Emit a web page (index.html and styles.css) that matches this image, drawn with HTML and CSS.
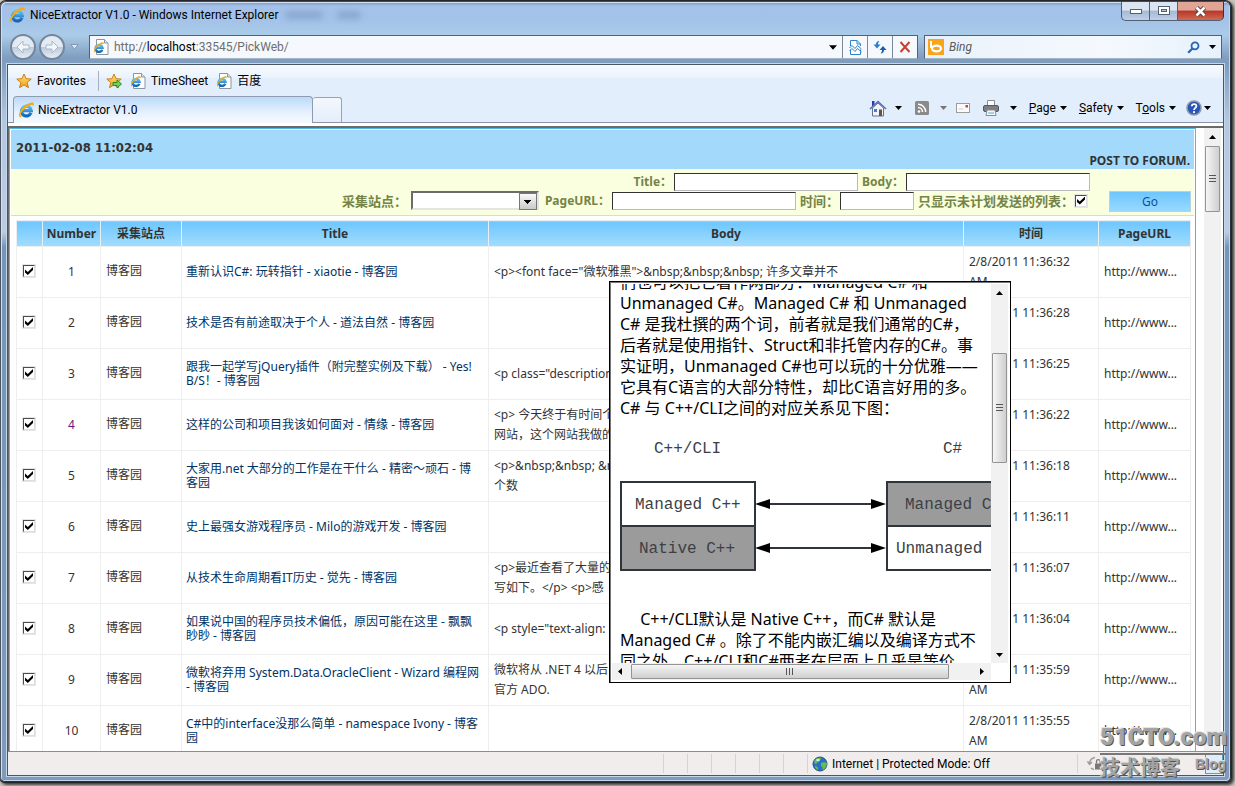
FILE: index.html
```
<!DOCTYPE html>
<html lang="zh-CN">
<head>
<meta charset="utf-8">
<title>NiceExtractor V1.0</title>
<link rel="stylesheet" href="styles.css">
</head>
<body>
<svg class="defs" aria-hidden="true">
  <defs>
    <linearGradient id="ieBlue" x1="0" y1="0" x2="0" y2="1"><stop offset="0" stop-color="#5cc4f4"/><stop offset="1" stop-color="#1464b4"/></linearGradient>
    <linearGradient id="starFill" x1="0" y1="0" x2="0" y2="1"><stop offset="0" stop-color="#ffe680"/><stop offset="1" stop-color="#f49a12"/></linearGradient>
    <symbol id="ie" viewBox="0 0 16 16">
      <path d="M13 10.800A4.900 4.900 0 1 1 13.300 8.600H5" fill="none" stroke="url(#ieBlue)" stroke-width="3.200"/>
      <path d="M2.200 15.300C-1 14 2.400 7 7.600 3.200 11 .6 15.600-.4 15.800 1.800c.1.800-.2 1.800-.8 2.700.1-1.200-.9-1.700-2.400-1.200C8.600 4.600 3.400 9.600 2.600 12.400c-.4 1.400.4 2 1.700 1.400-.8.800-1.600 1.500-2.100 1.500z" fill="#f2ab1c"/>
    </symbol>
    <symbol id="iepage" viewBox="0 0 16 16">
      <path d="M3.500.5h8l3.500 3.500v11.500H3.500z" fill="#fff" stroke="#8c959e"/>
      <path d="M11.500.5v3.500H15" fill="#dde3e8" stroke="#8c959e"/>
      <path d="M9.300 10.700A3.500 3.500 0 1 1 9.500 8.700H3.400" fill="none" stroke="url(#ieBlue)" stroke-width="2.400"/>
      <path d="M1.600 13.600C-.4 12.400 2 7.600 5.600 5c2.600-1.800 5.200-2.200 5.200-.8 0 .6-.2 1-.4 1.400-.2-.8-.8-1-1.800-.6C6.200 6 2.500 9.400 1.900 11.600c-.3 1.200.1 1.400 1 1.100z" fill="#f2ab1c"/>
    </symbol>
    <symbol id="star" viewBox="0 0 16 16">
      <path d="M8 1l2 4.700 5.200.4-4 3.400 1.300 5.200L8 11.900l-4.500 2.800 1.300-5.200-4-3.400 5.200-.4z" fill="url(#starFill)" stroke="#d08010"/>
    </symbol>
    <symbol id="down" viewBox="0 0 7 4"><path d="M0 0h7L3.500 4z" fill="currentColor"/></symbol>
    <symbol id="up" viewBox="0 0 7 4"><path d="M0 4h7L3.500 0z" fill="currentColor"/></symbol>
  </defs>
</svg>

<div class="window">
  <header class="titlebar">
    <svg class="ico16"><use href="#ie"/></svg>
    <h1 class="caption">NiceExtractor V1.0 - Windows Internet Explorer</h1>
    <span class="ghost ghost-a"></span><span class="ghost ghost-b"></span>
    <div class="winbtns">
      <button class="wb" aria-label="Minimize"><svg width="14" height="8" viewBox="0 0 14 8"><rect x="1.500" y="2.500" width="11" height="4" fill="#fff" stroke="#55606e"/></svg></button>
      <button class="wb" aria-label="Restore"><svg width="12" height="10" viewBox="0 0 12 10"><rect x=".5" y=".5" width="11" height="8" fill="#fff" stroke="#55606e"/><rect x="3.500" y="3.500" width="5" height="2" fill="#b8cce4" stroke="#55606e"/></svg></button>
      <button class="wb wb-close" aria-label="Close"><svg width="13" height="11" viewBox="0 0 13 11"><path d="M2.500 1.500l8 8m0-8l-8 8" stroke="#5c2f36" stroke-width="4.400"/><path d="M2.500 1.500l8 8m0-8l-8 8" stroke="#fff" stroke-width="2.600"/></svg></button>
    </div>
  </header>

  <nav class="navrow">
    <button class="round" aria-label="Back"><svg viewBox="0 0 16 16"><path d="M8 2L2 8l6 6v-4h6V6H8z" fill="#f4f7fa" stroke="#a9b7c6"/></svg></button>
    <button class="round" aria-label="Forward"><svg viewBox="0 0 16 16"><path d="M8 2l6 6-6 6v-4H2V6h6z" fill="#f4f7fa" stroke="#a9b7c6"/></svg></button>
    <button class="plain hist" aria-label="Recent pages"><svg width="9" height="6" viewBox="0 0 9 6"><path d="M.8.5h7.400L4.500 5z" fill="#dfe9f4" stroke="#8499b3"/></svg></button>
    <div class="address">
      <svg class="ico16"><use href="#iepage"/></svg>
      <p class="url" role="textbox" aria-label="Address">http://<b>localhost</b>:33545/PickWeb/</p>
      <button class="plain drop" aria-label="Show history"><svg class="arrow big"><use href="#down"/></svg></button>
      <button class="cell" aria-label="Compatibility view"><svg width="13" height="15" viewBox="0 0 13 15"><path d="M1.500 6V.5H8L11.500 4v2M1.500 9.500v5h10v-5" fill="#fff" stroke="#3182c8"/><path d="M8 .5V4h3.500" fill="none" stroke="#3182c8"/><path d="M.5 8l2.500-2.500L6 8.500l2.500-3L12.500 9M.5 11L3 8.500l3 3 2.500-3 4 3.500" fill="none" stroke="#3182c8"/></svg></button>
      <button class="cell" aria-label="Refresh"><svg width="14" height="14" viewBox="0 0 14 14"><path d="M6.500 1C4 1 3 2.500 3 4.500H.5L4 8.500l3.500-4H5C5 3 5.500 2 6.500 1z" fill="#2a7cd0"/><path d="M7.500 13.500C10 13.500 11 12 11 10h2.500L10 6l-3.500 4H9c0 1.500-.5 2.500-1.500 3.500z" fill="#1c5eaa"/></svg></button>
      <button class="cell" aria-label="Stop"><svg width="12" height="12" viewBox="0 0 12 12"><path d="M1.500 1l9 10M10.500 1l-9 10" stroke="#c8402e" stroke-width="2"/></svg></button>
    </div>
    <div class="search">
      <svg class="ico16" viewBox="0 0 16 16"><rect width="16" height="16" fill="#f9a51a"/><path d="M3 2v7" stroke="#fff" stroke-width="2"/><ellipse cx="8.500" cy="9.500" rx="4.500" ry="2.800" fill="none" stroke="#fff" stroke-width="2.200"/></svg>
      <input class="searchbox" type="text" placeholder="Bing" aria-label="Search">
      <button class="plain" aria-label="Search"><svg width="13" height="13" viewBox="0 0 13 13"><circle cx="8" cy="4.800" r="3.500" fill="#e6f2fc" stroke="#2566b4" stroke-width="1.800"/><path d="M5.400 7.400L1.200 11.800" stroke="#2566b4" stroke-width="2.200"/></svg></button>
      <button class="plain" aria-label="Search options"><svg class="arrow"><use href="#down"/></svg></button>
    </div>
  </nav>

  <div class="frame">
    <div class="favbar">
      <button class="plain fav"><svg class="ico16"><use href="#star"/></svg>Favorites</button>
      <i class="sep"></i>
      <button class="plain" aria-label="Add to favorites bar"><svg class="ico16" viewBox="0 0 16 16"><use href="#star"/><path d="M7 9.500h4V7l4.500 4-4.500 4v-2.500H7z" fill="#6ed05a" stroke="#2c8c28"/></svg></button>
      <a class="favlink" href="#"><svg class="ico16"><use href="#iepage"/></svg>TimeSheet</a>
      <a class="favlink" href="#"><svg class="ico16"><use href="#iepage"/></svg>百度</a>
    </div>
    <div class="tabrow">
      <button class="tab"><svg class="ico16"><use href="#ie"/></svg>NiceExtractor V1.0</button>
      <button class="newtab" aria-label="New tab"></button>
      <div class="commands">
        <button class="plain" aria-label="Home"><svg width="18" height="17" viewBox="0 0 18 17"><path d="M3.500 8v8h11V8L9 3z" fill="#f0f2f8" stroke="#69718c"/><path d="M3 1h2.500v4L3 7z" fill="#2c3ca8"/><path d="M1 9l8-7.500L17 9" fill="none" stroke="#5a6cb4" stroke-width="1.600"/><rect x="5" y="9" width="3" height="3" fill="#4c7cc0"/><path d="M10 9.500h3V16h-3z" fill="#665244"/></svg></button>
        <button class="plain gap-a" aria-label="Home options"><svg class="arrow"><use href="#down"/></svg></button>
        <button class="plain" aria-label="Feeds"><svg width="14" height="14" viewBox="0 0 14 14"><rect width="14" height="14" rx="1.500" fill="#8a8a8a"/><circle cx="4" cy="10.500" r="1.300" fill="#fff"/><path d="M3 6.500a4.500 4.500 0 0 1 4.500 4.500M3 3.300A7.700 7.700 0 0 1 10.700 11" fill="none" stroke="#fff" stroke-width="1.500"/></svg></button>
        <button class="plain gap-c dim" aria-label="Feed options"><svg class="arrow"><use href="#down"/></svg></button>
        <button class="plain gap-b" aria-label="Read mail"><svg width="14" height="10" viewBox="0 0 14 10"><rect x=".5" y=".5" width="13" height="9" fill="#fbfbfb" stroke="#9c9c9c"/><rect x="9.500" y="2" width="2.500" height="2.500" fill="#d04040"/><path d="M2.500 6h5" stroke="#d0d0d0"/></svg></button>
        <button class="plain" aria-label="Print"><svg width="16" height="16" viewBox="0 0 16 16"><path d="M4.500 6V.5h7V6" fill="#fff" stroke="#8d8d8d"/><rect x=".5" y="5.500" width="15" height="6" rx="1.500" fill="#7c7f84" stroke="#55585c"/><path d="M4 10h8l1 5.500H3z" fill="#f4f9ff" stroke="#8d8d8d"/><path d="M5 13h6" stroke="#58a8e0"/></svg></button>
        <button class="plain gap-c" aria-label="Print options"><svg class="arrow"><use href="#down"/></svg></button>
        <button class="plain menu"><span><u>P</u>age</span><svg class="arrow"><use href="#down"/></svg></button>
        <button class="plain menu"><span><u>S</u>afety</span><svg class="arrow"><use href="#down"/></svg></button>
        <button class="plain menu menu-last"><span>T<u>o</u>ols</span><svg class="arrow"><use href="#down"/></svg></button>
        <button class="plain help" aria-label="Help"><svg width="16" height="16" viewBox="0 0 16 16"><circle cx="8" cy="8" r="7" fill="#2a55b8" stroke="#8c98ac" stroke-width="1.600"/><path d="M5.800 6.300c0-3 4.600-2.900 4.600-.2C10.400 7.800 8 7.900 8 10" fill="none" stroke="#fff" stroke-width="1.800"/><circle cx="8" cy="12.200" r="1.100" fill="#fff"/></svg><svg class="arrow"><use href="#down"/></svg></button>
      </div>
    </div>

    <div class="viewport">
      <main class="page">
        <div class="banner">
          <time>2011-02-08 11:02:04</time>
          <strong>POST TO FORUM.</strong>
        </div>
        <form class="filter">
          <div class="fields">
            <div class="line">
              <label for="f-title" class="latin">Title：</label><input id="f-title" class="txt" type="text">
              <label for="f-body" class="latin">Body：</label><input id="f-body" class="txt" type="text">
            </div>
            <div class="line">
              <label for="f-site">采集站点：</label><span class="pick"><select id="f-site"><option></option></select></span>
              <label for="f-url" class="latin">PageURL：</label><input id="f-url" class="txt" type="text">
              <label for="f-time">时间：</label><input id="f-time" class="txt short" type="text">
              <label for="f-only">只显示未计划发送的列表：</label><input id="f-only" class="chk" type="checkbox" checked>
            </div>
          </div>
          <button class="go" type="button">Go</button>
        </form>
        <div class="gridwrap">
        <table class="grid">
          <colgroup><col class="c-chk"><col class="c-num"><col class="c-site"><col class="c-title"><col><col class="c-time"><col class="c-url"></colgroup>
          <thead><tr><th aria-label="Select"></th><th>Number</th><th>采集站点</th><th>Title</th><th>Body</th><th>时间</th><th>PageURL</th></tr></thead>
          <tbody>
            <tr><td><input class="chk" type="checkbox" aria-label="1" checked></td><td>1</td><td>博客园</td><td><a href="#">重新认识C#: 玩转指针 - xiaotie - 博客园</a></td><td>&lt;p&gt;&lt;font face="微软雅黑"&gt;&amp;nbsp;&amp;nbsp;&amp;nbsp; 许多文章并不</td><td>2/8/2011 11:36:32<br>AM</td><td>http://www...</td></tr>
            <tr><td><input class="chk" type="checkbox" aria-label="2" checked></td><td>2</td><td>博客园</td><td><a href="#">技术是否有前途取决于个人 - 道法自然 - 博客园</a></td><td></td><td>2/8/2011 11:36:28<br>AM</td><td>http://www...</td></tr>
            <tr><td><input class="chk" type="checkbox" aria-label="3" checked></td><td>3</td><td>博客园</td><td><a href="#">跟我一起学写jQuery插件（附完整实例及下载） - Yes!<br>B/S！- 博客园</a></td><td>&lt;p class="description"&gt;</td><td>2/8/2011 11:36:25<br>AM</td><td>http://www...</td></tr>
            <tr><td><input class="chk" type="checkbox" aria-label="4" checked></td><td class="seen">4</td><td>博客园</td><td><a href="#">这样的公司和项目我该如何面对 - 情缘 - 博客园</a></td><td>&lt;p&gt; 今天终于有时间个<br>网站，这个网站我做的</td><td>2/8/2011 11:36:22<br>AM</td><td>http://www...</td></tr>
            <tr><td><input class="chk" type="checkbox" aria-label="5" checked></td><td>5</td><td>博客园</td><td><a href="#">大家用.net 大部分的工作是在干什么 - 精密～顽石 - 博<br>客园</a></td><td>&lt;p&gt;&amp;nbsp;&amp;nbsp; &amp;nbsp;<br>个数</td><td>2/8/2011 11:36:18<br>AM</td><td>http://www...</td></tr>
            <tr><td><input class="chk" type="checkbox" aria-label="6" checked></td><td>6</td><td>博客园</td><td><a href="#">史上最强女游戏程序员 - Milo的游戏开发 - 博客园</a></td><td></td><td>2/8/2011 11:36:11<br>AM</td><td>http://www...</td></tr>
            <tr><td><input class="chk" type="checkbox" aria-label="7" checked></td><td>7</td><td>博客园</td><td><a href="#">从技术生命周期看IT历史 - 觉先 - 博客园</a></td><td>&lt;p&gt;最近查看了大量的<br>写如下。&lt;/p&gt; &lt;p&gt;感</td><td>2/8/2011 11:36:07<br>AM</td><td>http://www...</td></tr>
            <tr><td><input class="chk" type="checkbox" aria-label="8" checked></td><td>8</td><td>博客园</td><td><a href="#">如果说中国的程序员技术偏低，原因可能在这里 - 飘飘<br>眇眇 - 博客园</a></td><td>&lt;p style="text-align:</td><td>2/8/2011 11:36:04<br>AM</td><td>http://www...</td></tr>
            <tr><td><input class="chk" type="checkbox" aria-label="9" checked></td><td>9</td><td>博客园</td><td><a href="#">微軟将弃用 System.Data.OracleClient - Wizard 编程网<br>- 博客园</a></td><td>微软将从 .NET 4 以后<br>官方 ADO.</td><td>2/8/2011 11:35:59<br>AM</td><td>http://www...</td></tr>
            <tr><td><input class="chk" type="checkbox" aria-label="10" checked></td><td>10</td><td>博客园</td><td><a href="#">C#中的interface没那么简单 - namespace Ivony - 博客<br>园</a></td><td></td><td>2/8/2011 11:35:55<br>AM</td><td>http://www...</td></tr>
          </tbody>
        </table>
        </div>
      </main>
      <div class="vbar">
        <svg class="arrow"><use href="#up"/></svg>
        <span class="vthumb"><i></i></span>
      </div>

      <section class="preview">
        <div class="doc">
          <p>们也可以把它看作两部分：Managed C# 和<br>Unmanaged C#。Managed C# 和 Unmanaged<br>C# 是我杜撰的两个词，前者就是我们通常的C#，<br>后者就是使用指针、Struct和非托管内存的C#。事<br>实证明，Unmanaged C#也可以玩的十分优雅——<br>它具有C语言的大部分特性，却比C语言好用的多。<br>C# 与 C++/CLI之间的对应关系见下图：</p>
          <svg class="diagram" width="440" height="190" viewBox="0 0 440 190">
            <g fill="none" stroke="#30353b" stroke-width="2">
              <rect x="1" y="63" width="134" height="44" fill="#fff"/>
              <rect x="1" y="107" width="134" height="44" fill="#9b9b9b"/>
              <rect x="267" y="63" width="150" height="44" fill="#9b9b9b"/>
              <rect x="267" y="107" width="150" height="44" fill="#fff"/>
              <path d="M140 85h120M140 129h120"/>
            </g>
            <path d="M135 85l15-5v10zM266 85l-15-5v10zM135 129l15-5v10zM266 129l-15-5v10z" fill="#000"/>
            <g class="dtext">
              <text x="34" y="34">C++/CLI</text><text x="323" y="34">C#</text>
              <text x="15" y="90">Managed C++</text><text x="19" y="134">Native C++</text>
              <text x="285" y="90">Managed C#</text><text x="276" y="134">Unmanaged C#</text>
            </g>
          </svg>
          <p>&emsp; C++/CLI默认是 Native C++，而C# 默认是<br>Managed C# 。除了不能内嵌汇编以及编译方式不<br>同之外，C++/CLI和C#两者在层面上几乎是等价</p>
        </div>
        <div class="pv"><svg class="arrow"><use href="#up"/></svg><span class="pvthumb"><i></i></span><svg class="arrow"><use href="#down"/></svg></div>
        <div class="ph"><svg class="side" viewBox="0 0 4 7"><path d="M4 0v7L0 3.500z"/></svg><span class="phthumb"><i></i></span><svg class="side" viewBox="0 0 4 7"><path d="M0 0v7l4-3.500z"/></svg></div>
      </section>
    </div>

    <footer class="status">
      <i></i><i></i><i></i><i></i><i></i><i></i>
      <span class="zone"><svg class="ico16" viewBox="0 0 16 16"><circle cx="8" cy="8" r="7" fill="#2c6fc4" stroke="#2a4f86"/><path d="M2 5c2-3 5-4 7-3 0 2-2 2-2 4-2 0-2 2-4 2zM9 7c2-1 4-1 6 0 0 3-2 6-4 7-1-2 0-3-2-4zM3 10c2 0 3 1 3 4-2-1-3-2-3-4z" fill="#5fc04c"/><ellipse cx="6" cy="4" rx="2" ry="1" fill="#d8f0ff"/></svg>Internet | Protected Mode: Off</span>
      <span class="tray">
        <svg width="15" height="15" viewBox="0 0 15 15"><path d="M8 1.500A6 6 0 0 0 2.500 7.500M.5 5.500l2 3 2.500-2.500M4 12a6 6 0 0 0 3 1.500" fill="none" stroke="#9a9a9a" stroke-width="1.400"/><rect x="8" y="7.500" width="6.500" height="6" fill="#777"/><path d="M9.500 7.500V5.500a1.800 1.800 0 0 1 3.600 0v2" fill="none" stroke="#777" stroke-width="1.300"/></svg>
        <i class="popout"></i>
      </span>
    </footer>
  </div>

  <div class="stamp">
    <p class="stamp-top">51CTO.com</p>
    <p class="stamp-low"><span>技术博客</span><b>Blog</b></p>
  </div>
</div>
</body>
</html>
```
FILE: styles.css
```
* { box-sizing: border-box; }
html { height: 100%; }
body {
  height: 100%;
  margin: 0;
  padding: 1px 4px 4px 0;
  overflow: hidden;
  background: #c9c5ba;
  color: #000;
  font: 12px/16px Roboto, "Noto Sans CJK SC", sans-serif;
}
p, h1 { margin: 0; }
button, input, select { font: inherit; color: inherit; }
button { padding: 0; }
.defs { position: absolute; width: 0; height: 0; }
.ico16 { width: 16px; height: 16px; flex: none; }
.arrow { width: 7px; height: 4px; flex: none; }
.arrow.big { width: 8px; height: 5px; }
.plain { border: 0; background: none; display: flex; align-items: center; }

.window {
  position: relative;
  height: 100%;
  display: flex;
  flex-direction: column;
  padding: 0 6px 5px 6px;
  border: 1px solid #2b3038;
  border-top-color: #44495a;
  border-left-color: #4a5260;
  border-radius: 6px 6px 5px 5px;
  background: linear-gradient(180deg, #7f93b4 0, #a3c1ea 4px, #a4c3e8 20px, #abcce8 33px, #7f9dbf 56px, #7f9dbf 62px, #b4c8e2 120px, #bccce2 230px, #7695b8 245px, #7f9abb 100%);
  box-shadow: inset 1px 1px 0 #cfe0f4, inset -1px -1px 0 #bfd6ee, 0 0 0 1px #26262a, 2px 2px 3px 1px #3a3a3a;
}

.titlebar { display: flex; align-items: flex-start; height: 32px; flex: none; }
.titlebar .ico16 { margin: 5px 5px 0 2px; }
.caption { font-size: 12px; line-height: 26px; font-weight: 400; }
.ghost { height: 8px; margin-top: 9px; border-radius: 4px; background: #6f8cb4; filter: blur(3px); opacity: .5; }
.ghost-a { width: 38px; margin-left: 6px; }
.ghost-b { width: 24px; margin-left: 14px; }
.winbtns { display: flex; margin-left: auto; }
.wb {
  width: 28px; height: 19px; display: flex; align-items: center; justify-content: center;
  border: 1px solid #535f72; border-top: 0; border-right: 0;
  background: linear-gradient(#dbe5f1 0 45%, #a6bad4 50%, #bdd0e8);
}
.wb:first-child { border-radius: 0 0 0 5px; }
.wb-close { width: 47px; border-right: 1px solid #4d2a30; border-radius: 0 0 5px 0; background: linear-gradient(#e0a595 0 45%, #b8372a 50%, #cf6a50); }

.navrow { display: flex; align-items: center; height: 26px; flex: none; margin-bottom: 4px; padding-right: 2px; }
.round {
  width: 26px; height: 26px; margin: 0 0 0 3px; padding: 3px; border-radius: 50%;
  border: 2px solid #76869a; background: linear-gradient(#e2eaf3 0 48%, #bccbdc 52%, #e4edf6);
}
.round svg { width: 16px; height: 16px; display: block; }
.hist { margin: 0 10px 0 5px; }
.address { flex: 1; display: flex; align-items: center; height: 24px; border: 1px solid #56616f; border-bottom-color: #a3b4c2; background: #f5f9fd; padding-left: 3px; }
.url { flex: 1; margin-left: 5px; color: #6e6e6e; }
.url b { font-weight: 400; color: #000; }
.drop { margin-right: 5px; }
.cell { width: 25px; height: 22px; border: 0; border-left: 1px solid #7c8997; background: none; display: flex; align-items: center; justify-content: center; }
.search { display: flex; align-items: center; gap: 9px; width: 298px; height: 24px; margin-left: 6px; padding: 0 5px 0 3px; border: 1px solid #56616f; border-bottom-color: #a3b4c2; background: linear-gradient(90deg, #e8f1fb, #f5f9fd 60%, #e6f1fc); }
.searchbox { flex: 1; min-width: 0; padding: 0; margin-left: -4px; border: 0; background: none; font-style: italic; outline: 0; }
.searchbox::placeholder { color: #5a5a5a; opacity: 1; }

.frame { flex: 1; min-height: 0; display: flex; flex-direction: column; border: 1px solid #4a5566; box-shadow: 0 0 0 1px #c4d8ec; background: #fff; }
.favbar { display: flex; align-items: center; height: 31px; padding-left: 8px; flex: none; background: linear-gradient(#f7fbff, #eaf2fc 13px, #e2eefb 13px); }
.fav { gap: 5px; }
.sep { width: 1px; height: 20px; margin: 0 7px 0 12px; background: #a6b2c0; }
.favlink { display: flex; align-items: center; gap: 5px; margin-left: 8px; color: #000; text-decoration: none; }
.tabrow { display: flex; align-items: flex-end; height: 27px; flex: none; padding-left: 5px; background: #e2eefb; border-bottom: 1px solid #8a94a6; }
.tab { display: flex; align-items: center; gap: 4px; width: 300px; height: 27px; margin-bottom: -1px; padding: 0 4px; border: 1px solid #8f9bb0; border-bottom: 0; border-radius: 4px 4px 0 0; background: linear-gradient(#bcdafa, #e6f1fd 60%, #f6faff); text-align: left; }
.newtab { width: 29px; height: 25px; border: 1px solid #98a4b6; border-left: 0; border-bottom: 0; border-radius: 3px 3px 0 0; background: linear-gradient(#f4f8fd, #e4eefa); }
.commands { display: flex; align-items: center; height: 28px; margin-left: auto; padding-right: 12px; }
.gap-a { margin: 0 13px 0 8px; }
.gap-b { margin-right: 13px; }
.gap-c { margin: 0 12px 0 11px; }
.dim { color: #777; margin-right: 9px; }
.menu { gap: 4px; margin-right: 12px; }
.menu-last { margin-right: 10px; }
.help { gap: 2px; }

.viewport { position: relative; flex: 1; min-height: 0; display: flex; overflow: hidden; margin-top: 3px; border-top: 2px solid #6b6b6b; border-left: 1px solid #6b6b6b; font-family: "Noto Sans", "Noto Sans CJK SC", sans-serif; }
.page { flex: 1; min-width: 0; margin-right: 8px; border: 1px solid #4fb7ec; border-bottom: 0; padding: 1px 1px 0; background: #fff; }
.banner { display: flex; justify-content: space-between; height: 39px; padding: 9px 4px 0 5px; background: #a3dafb; color: #333; }
.banner time { font: bold 13px/18px "DejaVu Sans Condensed", "DejaVu Sans", sans-serif; }
.banner strong { font-size: 12px; line-height: 16px; align-self: flex-end; }
.filter { display: flex; align-items: flex-end; justify-content: flex-end; height: 47px; padding: 0 3px 3px 0; border-bottom: 1px solid #d9dcd3; background: #f9ffdf; color: #758346; font-weight: 700; }
.fields { padding-bottom: 2px; }
.line { display: flex; align-items: center; justify-content: flex-end; height: 19px; }
.line label { font-size: 13px; margin: 0 1px 0 4px; }
.line .latin { font-size: 12px; margin-right: 2px; }
.txt { width: 184px; height: 18px; border: 1px solid #333; border-right-color: #bbb; border-bottom-color: #bbb; background: #fff; padding: 0 2px; }
.short { width: 74px; }
.pick { position: relative; display: flex; margin: 0 2px 0 3px; }
.pick select { appearance: none; width: 128px; height: 19px; border: 2px solid #6b6b6b; border-right-color: #e4e4e4; border-bottom-color: #e4e4e4; border-radius: 0; background: #fff; }
.pick::after {
  content: ""; position: absolute; right: 2px; top: 2px; width: 16px; height: 15px; border: 1px solid #777; pointer-events: none;
  background: linear-gradient(#000, #000) center 6px / 7px 1px no-repeat, linear-gradient(#000, #000) center 7px / 5px 1px no-repeat, linear-gradient(#000, #000) center 8px / 3px 1px no-repeat, linear-gradient(#000, #000) center 9px / 1px 1px no-repeat, linear-gradient(#fafafa, #c9c9c9);
}
.go { width: 82px; height: 21px; margin-left: 19px; border: 1px solid #b5d3e8; background: linear-gradient(#6cc6fd, #9ad9ff); color: #0a50a0; line-height: 18px; font-weight: 400; }
.chk { appearance: none; width: 12px; height: 12px; margin: 0; border: 1px solid #4c4c4c; border-right-color: #ddd; border-bottom-color: #ddd; outline: 1px solid #e6e6e6; background: #fff; display: block; flex: none; }
.chk:checked::after { content: ""; display: block; width: 8px; height: 8px; margin: 1px; background: #000; clip-path: polygon(0 30%, 35% 62%, 100% 0, 100% 38%, 35% 100%, 0 68%); }
.line .chk { margin: 0 3px 0 0; }

.gridwrap { padding: 4px 3px 0 5px; }
.grid { width: 100%; table-layout: fixed; border-collapse: collapse; color: #333; border-right: 1px solid #999; }
.c-chk { width: 26px; } .c-num { width: 58px; } .c-site { width: 81px; } .c-title { width: 307px; } .c-time { width: 135px; } .c-url { width: 92px; }
.grid th { height: 26px; padding: 0; border: 1px solid #e8eef2; background: linear-gradient(#6cc6fd, #a3ddff); line-height: 18px; font-weight: 700; }
.grid td { height: 51px; padding: 0 5px; border: 1px solid #eee; line-height: 20px; overflow: hidden; }
.grid td:nth-child(1) { padding: 0 0 2px 6px; }
.grid td:nth-child(2) { text-align: center; }
.grid td:nth-child(3) { padding: 0 0 2px 5px; }
.grid td:nth-child(4) { line-height: 14px; white-space: nowrap; padding: 0 4px; }
.grid td:nth-child(5) { white-space: nowrap; }
.grid td:nth-child(7) { white-space: nowrap; }
.grid a { color: #003366; text-decoration: none; }
.grid .seen { color: #6a1a7a; }

.vbar { width: 17px; flex: none; display: flex; flex-direction: column; align-items: center; padding-top: 7px; margin-right: 2px; background: #f1f1f1; }
.vthumb { width: 15px; height: 66px; margin-top: 7px; }
.vthumb, .pvthumb, .phthumb { display: flex; align-items: center; justify-content: center; border: 1px solid #949494; border-radius: 1px; background: linear-gradient(90deg, #f6f6f6, #e2e2e2 50%, #cfcfcf); }
.vthumb i, .pvthumb i { width: 7px; height: 8px; background: repeating-linear-gradient(#555 0 1px, transparent 1px 3px); }

.preview { position: absolute; left: 600px; top: 153px; width: 402px; height: 402px; display: grid; grid-template: 1fr 17px / 1fr 17px; border: 1px solid #000; background: #fff; box-shadow: inset 1px 1px 0 #777; padding: 2px; }
.doc { overflow: hidden; padding-left: 8px; display: flex; flex-direction: column; justify-content: flex-end; font-size: 16px; line-height: 21px; white-space: nowrap; min-height: 0; min-width: 0; }
.doc p { flex: none; }
.doc p:last-child { margin-bottom: -9px; }
.diagram { flex: none; }
.dtext { font: 16px "Liberation Mono", monospace; fill: #3c4046; }
.pv { display: flex; flex-direction: column; align-items: center; background: #f1f1f1; padding: 7px 0 6px; }
.pvthumb { width: 15px; height: 110px; margin: 58px 0 auto; }
.ph { display: flex; align-items: center; background: #f1f1f1; padding: 0 7px 0 6px; }
.phthumb { width: 318px; height: 15px; margin: 0 auto 0 9px; background: linear-gradient(#f6f6f6, #e2e2e2 50%, #cfcfcf); }
.phthumb i { width: 8px; height: 7px; background: repeating-linear-gradient(90deg, #555 0 1px, transparent 1px 3px); }
.side { width: 4px; height: 7px; flex: none; }

.status { display: flex; align-items: center; height: 24px; flex: none; border-top: 1px solid #8d8d8d; box-shadow: 0 -1px 0 #fff; background: #f1edec; padding-left: 655px; }
.status > i { width: 24px; height: 19px; flex: none; border-left: 1px solid #d6d3d2; }
.zone { display: flex; align-items: center; gap: 4px; width: 271px; height: 19px; flex: none; padding-left: 4px; border-left: 1px solid #d6d3d2; border-right: 1px solid #d6d3d2; }
.tray { flex: 1; display: flex; align-items: center; justify-content: space-between; padding-left: 9px; }
.popout { width: 18px; height: 20px; border: 1px solid #5a9ad0; background: #dceefb; }

.stamp { position: absolute; right: 4px; bottom: 2px; width: 126px; color: #a4a4a4; text-shadow: 1px 1px 0 #555, -1px -1px 0 #e4e4e4; }
.stamp-top { font: 900 24px/31px Roboto, "Liberation Sans", sans-serif; border-bottom: 2px solid #777; }
.stamp-low { display: flex; justify-content: space-between; font: bold 20px/24px "Noto Sans CJK SC", sans-serif; }
.stamp-low b { font: bold 14px/18px "Liberation Sans", sans-serif; }
```
